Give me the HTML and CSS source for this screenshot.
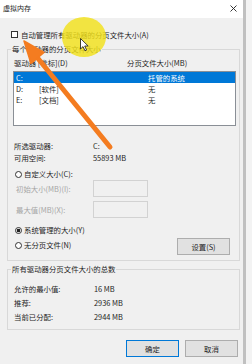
FILE: index.html
```html
<!doctype html>
<html lang="zh-CN">
<head>
  <meta charset="UTF-8">
  <title>虚拟内存</title>
  <link rel="stylesheet" href="styles.css">
</head>
<body>
  <div class="dlg">
    <div class="titlebar">
      <span class="caption">虚拟内存</span>
      <svg class="close" width="7" height="7" viewBox="0 0 7 7"><path d="M0.5 0.5L6.5 6.5M6.5 0.5L0.5 6.5" stroke="#222" stroke-width="0.9"/></svg>
    </div>

    <div class="auto"><span class="chk"></span>自动管理所有驱动器的分页文件大小(A)</div>

    <fieldset class="grp grp-drv">
      <legend>每个驱动器的分页文件大小</legend>
      <div class="cols"><span class="col-drv">驱动器 [卷标](D)</span><span>分页文件大小(MB)</span></div>
      <ul class="list">
        <li class="sel"><span class="c1">C:</span><span class="c2"></span><span>托管的系统</span></li>
        <li><span class="c1">D:</span><span class="c2">[软件]</span><span>无</span></li>
        <li><span class="c1">E:</span><span class="c2">[文档]</span><span>无</span></li>
      </ul>
      <div class="info info-first"><span class="lbl">所选驱动器:</span><span>C:</span></div>
      <div class="info"><span class="lbl">可用空间:</span><span>55893 MB</span></div>
      <div class="radio r-custom"><span class="dot"></span>自定义大小(C):</div>
      <div class="field field-first"><span class="lbl dim">初始大小(MB)(I):</span><span class="input"></span></div>
      <div class="field"><span class="lbl dim">最大值(MB)(X):</span><span class="input"></span></div>
      <div class="radio r-sys"><span class="dot on"></span>系统管理的大小(Y)</div>
      <div class="last">
        <div class="radio"><span class="dot"></span>无分页文件(N)</div>
        <button class="btn btn-set">设置(S)</button>
      </div>
    </fieldset>

    <fieldset class="grp grp-sum">
      <legend>所有驱动器分页文件大小的总数</legend>
      <div class="sum"><span class="lbl">允许的最小值:</span><span>16 MB</span></div>
      <div class="sum"><span class="lbl">推荐:</span><span>2936 MB</span></div>
      <div class="sum"><span class="lbl">当前已分配:</span><span>2944 MB</span></div>
    </fieldset>

    <div class="buttons">
      <button class="btn btn-ok">确定</button>
      <button class="btn">取消</button>
    </div>
  </div>

  <!-- annotation drawn over the screenshot -->
  <svg class="marks" width="252" height="364" viewBox="0 0 252 364">
    <ellipse cx="84" cy="37" rx="22" ry="20" fill="#f1e01a" opacity="0.82"/>
    <path d="M80.5 38.5 L80.5 49 L83 46.6 L85 50.8 L86.6 50.1 L84.7 46 L88.2 46 Z" fill="#fff" stroke="#111" stroke-width="0.8" stroke-linejoin="round"/>
    <line x1="36" y1="56" x2="110" y2="147" stroke="#f47c20" stroke-width="5" stroke-linecap="round"/>
    <path d="M24 41 L44 52.5 L31 63.5 Z" fill="#f47c20" stroke="#f47c20" stroke-width="1.5" stroke-linejoin="round"/>
  </svg>
</body>
</html>
```

FILE: styles.css
```css
* {
  box-sizing: border-box;
}

body {
  margin: 0;
  position: relative;
  background: #f3f3f3;
  font-family: "Noto Sans CJK SC", "Microsoft YaHei", sans-serif;
  font-size: 7.4px;
  color: #1e1e1e;
}

.dlg {
  width: 246px;
  height: 364px;
  background: #f0f0f0;
  border-right: 3px solid #c0c0c0;
  overflow: hidden;
}

.titlebar {
  height: 18px;
  background: #fff;
  display: flex;
  align-items: center;
  justify-content: space-between;
  padding: 0 6px 2px 3px;
  font-size: 7px;
}

.auto {
  margin-top: 12px;
  height: 9px;
  line-height: 9px;
  display: flex;
  align-items: center;
  gap: 3px;
  padding-left: 11px;
}

.chk {
  width: 7px;
  height: 7px;
  border: 1px solid #333;
  background: #fff;
}

.grp {
  margin: 0 3px 0 7px;
  padding: 0 3px 5px 6px;
  border: 1px solid #d8d8d8;
  min-width: 0;
}

.grp legend {
  margin-left: -3px;
  padding: 0 1px;
  height: 10px;
  line-height: 10px;
}

.grp-drv {
  margin-top: 5px;
}

.cols {
  margin-top: 4px;
  height: 10px;
  line-height: 10px;
  display: flex;
}

.col-drv {
  width: 113px;
}

.list {
  margin: 3px 0 0 -1px;
  padding: 0;
  list-style: none;
  height: 55px;
  border: 1px solid #8a8f96;
  background: #fff;
}

.list li {
  height: 11px;
  line-height: 11px;
  display: flex;
  padding-left: 2px;
}

.list li.sel {
  background: #0078d7;
  color: #fff;
}

.c1 {
  width: 23px;
}

.c2 {
  width: 109px;
}

.info {
  height: 12px;
  line-height: 12px;
  display: flex;
}

.info-first {
  margin-top: 14px;
}

.lbl {
  width: 79px;
  flex-shrink: 0;
}

.radio {
  height: 10px;
  line-height: 10px;
  display: flex;
  align-items: center;
  gap: 2px;
}

.dot {
  width: 7px;
  height: 7px;
  margin-left: 1px;
  border: 1px solid #333;
  border-radius: 50%;
  background: #fff;
}

.dot.on {
  background: radial-gradient(circle, #222 1.6px, #fff 2.1px);
}

.r-custom {
  margin-top: 5px;
}

.field {
  height: 17px;
  display: flex;
  align-items: center;
  margin-top: 4px;
}

.field-first {
  margin-top: 1px;
}

.field .lbl {
  padding-left: 2px;
}

.dim {
  color: #a6a6a6;
}

.input {
  width: 55px;
  height: 17px;
  border: 1px solid #d2d2d2;
  background: #f0f0f0;
}

.r-sys {
  margin-top: 7px;
}

.last {
  margin-top: 3px;
  height: 17px;
  display: flex;
  justify-content: space-between;
  align-items: flex-start;
}

.last .radio {
  margin-top: 2px;
}

.btn {
  width: 53px;
  height: 17px;
  padding: 0;
  font: inherit;
  color: #1e1e1e;
  background: #e1e1e1;
  border: 1px solid #adadad;
}

.btn-set {
  margin-right: 6px;
}

.grp-sum {
  margin-top: 3px;
  padding-top: 8px;
}

.sum {
  height: 14px;
  line-height: 14px;
  display: flex;
}

.sum .lbl {
  width: 80px;
}

.buttons {
  margin-top: 10px;
  padding-right: 5px;
  display: flex;
  justify-content: flex-end;
  gap: 6px;
}

.btn-ok {
  border-color: #0078d7;
}

.marks {
  position: absolute;
  top: 0;
  left: 0;
  pointer-events: none;
}
```
